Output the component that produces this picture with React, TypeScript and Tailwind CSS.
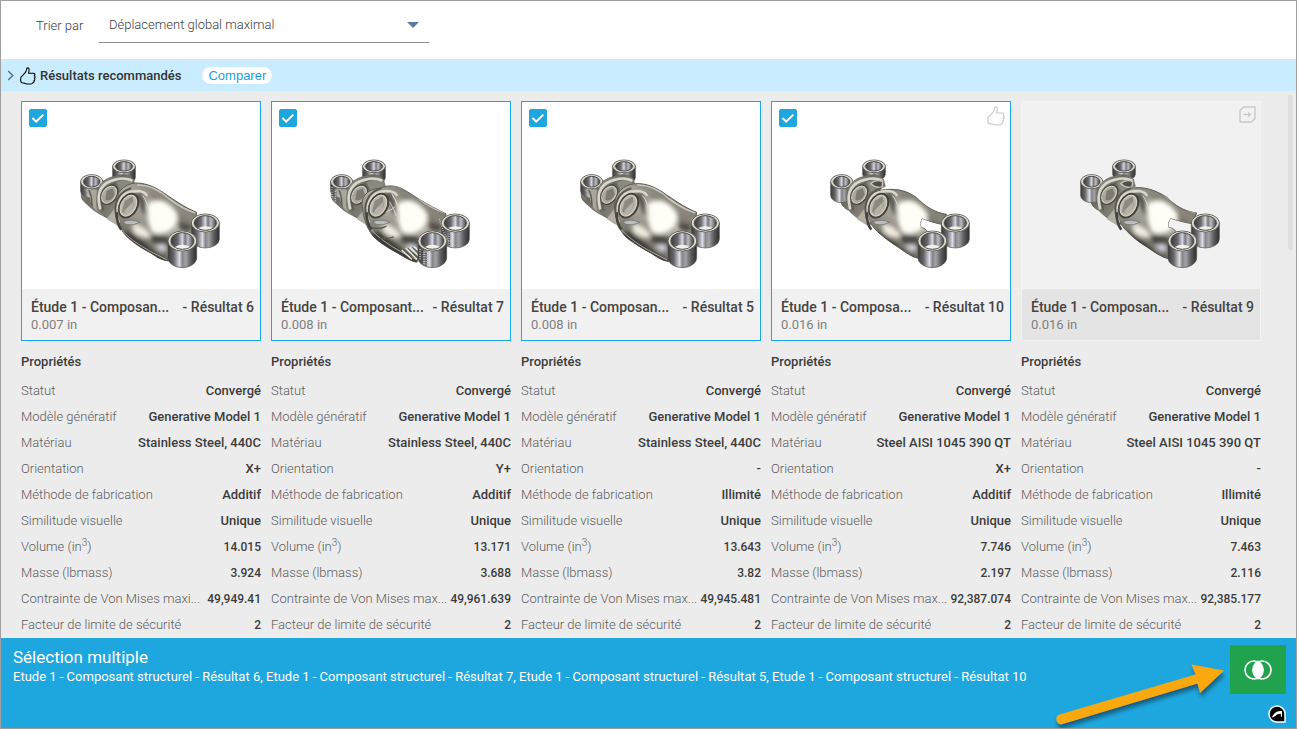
import { useId } from 'react'

type Shape = 'solid' | 'ribbed' | 'smooth' | 'forked' | 'open'

interface Outcome {
  title: string
  suffix: string
  displacement: string
  shape: Shape
  selected: boolean
  badge?: 'recommended' | 'exported'
  values: string[]
  stressLabel: string
}

const outcomes: Outcome[] = [
  {
    title: 'Étude 1 - Composan...',
    suffix: '- Résultat 6',
    displacement: '0.007 in',
    shape: 'solid',
    selected: true,
    stressLabel: 'Contrainte de Von Mises maxi...',
    values: ['Convergé', 'Generative Model 1', 'Stainless Steel, 440C', 'X+', 'Additif', 'Unique', '14.015', '3.924', '49,949.41', '2'],
  },
  {
    title: 'Étude 1 - Composant...',
    suffix: '- Résultat 7',
    displacement: '0.008 in',
    shape: 'ribbed',
    selected: true,
    stressLabel: 'Contrainte de Von Mises max...',
    values: ['Convergé', 'Generative Model 1', 'Stainless Steel, 440C', 'Y+', 'Additif', 'Unique', '13.171', '3.688', '49,961.639', '2'],
  },
  {
    title: 'Étude 1 - Composan...',
    suffix: '- Résultat 5',
    displacement: '0.008 in',
    shape: 'smooth',
    selected: true,
    stressLabel: 'Contrainte de Von Mises max...',
    values: ['Convergé', 'Generative Model 1', 'Stainless Steel, 440C', '-', 'Illimité', 'Unique', '13.643', '3.82', '49,945.481', '2'],
  },
  {
    title: 'Étude 1 - Composa...',
    suffix: '- Résultat 10',
    displacement: '0.016 in',
    shape: 'forked',
    selected: true,
    badge: 'recommended',
    stressLabel: 'Contrainte de Von Mises max...',
    values: ['Convergé', 'Generative Model 1', 'Steel AISI 1045 390 QT', 'X+', 'Additif', 'Unique', '7.746', '2.197', '92,387.074', '2'],
  },
  {
    title: 'Étude 1 - Composan...',
    suffix: '- Résultat 9',
    displacement: '0.016 in',
    shape: 'open',
    selected: false,
    badge: 'exported',
    stressLabel: 'Contrainte de Von Mises max...',
    values: ['Convergé', 'Generative Model 1', 'Steel AISI 1045 390 QT', '-', 'Illimité', 'Unique', '7.463', '2.116', '92,385.177', '2'],
  },
]

const bodies: Record<Shape, string> = {
  solid:
    'M288 330 C284 296 312 266 346 264 C384 264 412 280 440 300 C476 324 500 340 530 352 L520 420 L470 440 L446 498 C424 496 410 486 396 476 C372 464 344 446 326 430 C304 410 286 380 288 330Z',
  ribbed:
    'M276 330 C274 300 300 280 330 280 C350 270 374 270 398 282 C430 300 470 330 528 356 L522 420 L470 440 L440 502 C424 498 408 490 396 482 C372 468 340 452 316 430 C296 412 280 376 276 330Z',
  smooth:
    'M284 330 C284 296 310 268 346 266 C384 264 412 280 440 300 C476 324 500 340 530 352 L520 420 L470 440 L446 500 C424 496 410 486 396 476 C372 464 344 446 322 430 C300 410 286 380 284 330Z',
  forked:
    'M290 330 C290 300 312 286 346 284 C384 280 412 288 440 308 C466 334 492 352 530 358 L516 388 C494 384 476 378 456 370 C450 380 450 392 454 399 C462 398 470 404 472 412 L446 490 C424 486 404 470 384 456 C352 436 324 414 308 394 C294 376 290 356 290 330Z',
  open:
    'M290 330 C290 300 312 280 346 278 C384 276 412 290 440 306 C466 332 490 348 530 354 L516 386 C492 382 472 376 452 370 C444 380 442 390 446 398 C456 398 464 404 470 412 L446 492 C424 486 404 472 384 458 C350 438 324 414 308 394 C294 376 290 356 290 330Z',
}

function Bushing({ cx, cy, rx, ry, depth, metal, bore }: { cx: number; cy: number; rx: number; ry: number; depth: number; metal: string; bore: string }) {
  return (
    <g>
      <path
        d={`M${cx - rx} ${cy} V${cy + depth} A${rx} ${ry} 0 0 0 ${cx + rx} ${cy + depth} V${cy} Z`}
        fill={metal}
        stroke="#55534f"
        strokeWidth="2"
      />
      <ellipse cx={cx} cy={cy} rx={rx} ry={ry} fill="#bdbab2" stroke="#62605a" strokeWidth="3" />
      <ellipse cx={cx} cy={cy} rx={rx - 3} ry={ry - 3} fill="none" stroke="#e9e6de" strokeWidth="3" />
      <ellipse cx={cx} cy={cy} rx={rx - 9} ry={ry - 5} fill={bore} stroke="#4b4946" strokeWidth="3" />
      {rx > 36 && (
        <path
          d={`M${cx - rx + 20} ${cy + ry - 12} Q${cx} ${cy + 4} ${cx + rx - 20} ${cy + ry - 12} Q${cx} ${cy + ry - 3} ${cx - rx + 20} ${cy + ry - 12}Z`}
          fill="#f2f0ea"
        />
      )}
    </g>
  )
}

function BracketModel({ shape }: { shape: Shape }) {
  const id = useId()
  const metal = `${id}metal`
  const bore = `${id}bore`
  const skin = `${id}skin`
  const cheek = `${id}cheek`
  const soft = `${id}soft`
  const clip = `${id}clip`
  const light = shape === 'forked' || shape === 'open'

  return (
    <svg viewBox="6 21 714 561" className="block w-full" aria-hidden="true">
      <defs>
        <linearGradient id={metal}>
          <stop offset="0" stopColor="#3b3a37" />
          <stop offset="0.2" stopColor="#66656a" />
          <stop offset="0.4" stopColor="#dcdde4" />
          <stop offset="0.5" stopColor="#85858b" />
          <stop offset="0.62" stopColor="#a3a3a6" />
          <stop offset="0.8" stopColor="#5d5d60" />
          <stop offset="1" stopColor="#2f2f2f" />
        </linearGradient>
        <linearGradient id={bore}>
          <stop offset="0" stopColor="#3c3b38" />
          <stop offset="0.3" stopColor="#6a6a70" />
          <stop offset="0.5" stopColor="#d8d9e0" />
          <stop offset="0.62" stopColor="#77777d" />
          <stop offset="0.75" stopColor="#bcbdc4" />
          <stop offset="1" stopColor="#44433f" />
        </linearGradient>
        <linearGradient id={skin} x1="0.1" y1="0.9" x2="0.7" y2="0.1">
          <stop offset="0" stopColor="#45433e" />
          <stop offset="0.35" stopColor="#8a867c" />
          <stop offset="0.65" stopColor="#b5b1a6" />
          <stop offset="1" stopColor="#77736a" />
        </linearGradient>
        <linearGradient id={cheek} x1="0" y1="0" x2="1" y2="1">
          <stop offset="0" stopColor="#a19d91" />
          <stop offset="0.35" stopColor="#6c6961" />
          <stop offset="0.7" stopColor="#918e84" />
          <stop offset="1" stopColor="#4b4943" />
        </linearGradient>
        <filter id={soft} x="-40%" y="-40%" width="180%" height="180%">
          <feGaussianBlur stdDeviation="6" />
        </filter>
        <clipPath id={clip}>
          <path d={bodies[shape]} />
        </clipPath>
      </defs>

      {/* rear mounts */}
      <Bushing cx={312} cy={214} rx={34} ry={19} depth={light ? 24 : 34} metal={`url(#${metal})`} bore={`url(#${bore})`} />
      <path
        d={
          light
            ? 'M210 306 C212 330 222 340 236 346 C250 352 258 362 272 372 L304 338 L290 256 L246 270Z'
            : 'M184 262 L184 306 C188 320 200 326 210 336 C226 352 242 358 264 370 L304 338 L290 256 L246 258Z'
        }
        fill={`url(#${cheek})`}
        stroke="#56544e"
        strokeWidth="2"
      />
      <Bushing cx={215} cy={260} rx={33} ry={21} depth={light ? 42 : 28} metal={`url(#${metal})`} bore={`url(#${bore})`} />
      {!light && <path d="M192 284 Q204 286 212 318 Q216 336 232 350 Q224 328 234 286Z" fill="#aaa69b" />}
      {!light && <path d="M206 284 Q216 300 216 334" fill="none" stroke="#5c5952" strokeWidth="4" />}

      {/* rear fork cheek */}
      <path
        d="M232 322 C224 274 250 250 284 244 C306 234 330 240 340 252 L346 274 L306 290 L302 388 C278 382 256 366 240 350Z"
        fill={`url(#${cheek})`}
        stroke="#6a675f"
        strokeWidth="2"
      />
      <path d="M290 262 Q316 248 338 262 L340 278 L304 290Z" fill="#8b887e" />
      <path d="M240 340 C226 286 250 262 286 254 Q312 246 334 256" fill="none" stroke="#d9d6cb" strokeWidth="8" strokeLinecap="round" />
      <path d="M250 346 C238 296 252 276 286 266" fill="none" stroke="#5e5b54" strokeWidth="5" />
      <ellipse cx="268" cy="299" rx="22" ry="31" transform="rotate(34 268 299)" fill="#aaa69b" stroke="#4c4a44" strokeWidth="5" />
      <ellipse cx="267" cy="299" rx="19" ry="28" transform="rotate(34 267 299)" fill="none" stroke="#d5d2c8" strokeWidth="3" />
      <path d="M256 314 L260 288 L278 280 L284 298 Q274 322 256 314Z" fill="#7d7a72" />
      {light && <path d="M302 266 Q318 252 338 260 L336 276 Q318 280 302 266Z" fill="#514f4a" stroke="#c5c2b8" strokeWidth="4" />}
      <path d="M260 372 L284 340 L298 396Z" fill="#b3afa4" />

      {/* main body */}
      <path d={bodies[shape]} fill={`url(#${skin})`} stroke="#5f5c55" strokeWidth="3" />
      <g clipPath={`url(#${clip})`}>
        <g filter={`url(#${soft})`}>
          <path d="M300 420 Q330 400 354 426 Q400 470 450 500 L430 520 L300 470Z" fill="#3d3b37" />
          <path d="M380 290 Q420 300 476 352 L520 370 L500 396 Q460 366 420 330Z" fill="#827e73" />
          <path d="M384 326 Q426 302 462 344 Q482 366 460 396 Q430 426 396 410 Q376 366 384 326Z" fill="#fffef6" />
          <path d="M384 326 Q426 302 462 344 Q482 366 460 396 Q430 426 396 410 Q376 366 384 326Z" fill="#fffef6" opacity="0.6" />
          <path d="M336 384 Q378 390 394 426 Q366 434 340 412Z" fill="#efebde" />
          <path d="M388 424 Q430 412 456 436 L438 478 Q406 464 388 424Z" fill="#4c4a44" />
          <path d="M360 292 Q378 324 384 366 L368 350 Q360 320 344 296Z" fill="#454340" />
          <path d="M474 380 L520 390 L506 412 L480 404Z" fill="#4f4c47" />
          <path d="M404 450 L436 448 L440 468 L420 468Z" fill="#d3d5dd" />
        </g>
        <path d="M352 270 Q400 268 448 312 Q488 342 526 354" fill="none" stroke="#dbd7ca" strokeWidth="5" opacity="0.8" />
        <path d="M368 302 Q384 322 386 350" fill="none" stroke="#d9d6ca" strokeWidth="3" />
        <path d="M308 380 Q334 370 360 382 Q338 394 318 388Z" fill="#b9bdc2" stroke="#6b6861" strokeWidth="2" />
        <path d="M300 400 Q332 438 400 474 L440 494" fill="none" stroke="#d8d4c8" strokeWidth="3" opacity="0.7" />
        {shape === 'ribbed' && (
          <g fill="none" strokeLinecap="round">
            <path d="M366 296 Q390 334 388 376 M358 320 Q372 338 378 362 M340 352 Q360 350 374 336" stroke="#d9d5c9" strokeWidth="3" />
            <path d="M304 398 Q330 404 348 394 M330 430 Q350 434 370 426" stroke="#5a5750" strokeWidth="4" />
            <path d="M396 466 L424 492 M408 460 L440 492 M420 458 L452 488 M434 456 L460 480" stroke="#f0ede2" strokeWidth="4" />
            <path d="M402 464 L430 492 M414 460 L446 492 M428 458 L458 484" stroke="#4a4843" strokeWidth="3" />
          </g>
        )}
      </g>

      {/* front fork eye */}
      <path d="M296 380 C278 334 298 290 350 288 Q372 288 380 300" fill="none" stroke="#d9d6ca" strokeWidth="7" strokeLinecap="round" />
      <path d="M290 368 C278 326 296 290 334 280" fill="none" stroke="#5b5851" strokeWidth="6" />
      <path d="M290 352 Q290 388 304 404" fill="none" stroke="#45433f" strokeWidth="8" />
      <ellipse cx="326" cy="332" rx="26" ry="38" transform="rotate(28 326 332)" fill="#aaa699" stroke="#43413c" strokeWidth="6" />
      <ellipse cx="325" cy="332" rx="22" ry="33" transform="rotate(28 325 332)" fill="#b8b4a8" stroke="#d5d2c7" strokeWidth="3" />
      <path d="M306 350 L314 318 L338 304 L342 330 Q328 362 306 350Z" fill="#8d897f" />
      <path d="M312 348 L342 318 Q340 350 320 356Z" fill="#b5b1a5" />

      {/* front mounts */}
      <Bushing cx={556} cy={384} rx={42} ry={27} depth={48} metal={`url(#${metal})`} bore={`url(#${bore})`} />
      <Bushing cx={487} cy={438} rx={43} ry={30} depth={50} metal={`url(#${metal})`} bore={`url(#${bore})`} />
      {shape === 'ribbed' && (
        <g strokeDasharray="3 4" fill="none" strokeWidth="4">
          <path d="M450 462 V496 M462 470 V508 M474 474 V514" stroke="#e7e5df" />
          <path d="M456 468 V502 M468 474 V512 M538 412 V450" stroke="#3e3d3a" />
          <path d="M508 372 L520 410 L536 440 M186 276 V312 M196 288 V324" stroke="#c9c6bd" />
        </g>
      )}
    </svg>
  )
}

function ThumbIcon({ className }: { className: string }) {
  return (
    <svg viewBox="0 0 18 20" className={className} fill="none" stroke="currentColor" strokeWidth="1.2" strokeLinejoin="round" aria-hidden="true">
      <path d="M1.2 11.2 5.6 6.6C7.2 4.9 7.3 3.1 7.6 1.6 8 .5 9.8.6 10.1 2c.3 1.6 0 3.3-.5 5h5.5c1.8 0 2.2 1.9.9 2.7 1.4.6 1.3 2.3.1 2.8 1 .8.7 2.3-.5 2.7.7 1 .1 2.4-1.2 2.5-.5.9-1.2 1.3-2.3 1.3H8.2c-1.6 0-2.6-.5-3.8-1.2H2.9C1.2 17.6.7 16.2.7 14.6c0-1.4 0-2.6.5-3.4Z" />
    </svg>
  )
}

function ExportedIcon() {
  return (
    <svg viewBox="0 0 17 17" className="size-[17px]" fill="none" stroke="currentColor" strokeWidth="1.4" aria-hidden="true">
      <path d="M4.5 1H16v11.5L12.5 16H1V4.5Z" strokeLinejoin="round" />
      <path d="M4.5 8.5h6" />
      <path d="M9 5.8v5.4l3.4-2.7Z" fill="currentColor" stroke="none" />
    </svg>
  )
}

function OutcomeCard({ outcome }: { outcome: Outcome }) {
  const { selected } = outcome
  return (
    <article className={selected ? 'relative border border-[#1ea7de] bg-white' : 'relative border border-[#f3f3f3] bg-[#f1f1f1]'}>
      {selected && (
        <div className="absolute top-[7px] left-[7px] size-[18px]">
          <input
            type="checkbox"
            defaultChecked
            aria-label={`${outcome.title} ${outcome.suffix}`}
            className="peer block size-[18px] appearance-none rounded-[2px] border border-[#1ea7de] checked:bg-[#1ea7de]"
          />
          <svg viewBox="0 0 18 18" className="pointer-events-none absolute inset-0 hidden peer-checked:block" fill="none" stroke="white" strokeWidth="2" aria-hidden="true">
            <path d="m3.5 9 3.7 3.6L14.3 5.6" />
          </svg>
        </div>
      )}
      {outcome.badge && (
        <span className="absolute top-1 right-1 text-[#c9c9c9]">
          {outcome.badge === 'recommended' ? <ThumbIcon className="h-5 w-5" /> : <ExportedIcon />}
        </span>
      )}
      <BracketModel shape={outcome.shape} />
      <div className={selected ? 'h-[51px] bg-[#f1f1f1] pt-2 pr-[6px] pl-[9px]' : 'h-[51px] bg-[#e4e4e4] pt-2 pr-[6px] pl-[9px]'}>
        <h2 className="flex justify-between text-sm leading-5 font-medium whitespace-nowrap text-[#444]">
          <span>{outcome.title}</span>
          <span>{outcome.suffix}</span>
        </h2>
        <p className="text-[13px] leading-4 text-[#808080]">{outcome.displacement}</p>
      </div>
    </article>
  )
}

function Properties({ outcome }: { outcome: Outcome }) {
  const labels = [
    'Statut',
    'Modèle génératif',
    'Matériau',
    'Orientation',
    'Méthode de fabrication',
    'Similitude visuelle',
    <>Volume (in<sup className="text-[10px]">3</sup>)</>,
    'Masse (lbmass)',
    outcome.stressLabel,
    'Facteur de limite de sécurité',
  ]
  return (
    <section className="pt-[11px] text-[13px] whitespace-nowrap">
      <h3 className="mb-[6px] leading-5 font-medium text-[#3c3c3c]">Propriétés</h3>
      <dl>
        {outcome.values.map((value, i) => (
          <div key={i} className="flex h-[26px] items-center justify-between">
            <dt className="font-light text-[#5c5c5c]">{labels[i]}</dt>
            {/* measured quantities start at the volume row */}
            <dd className={i >= 6 ? 'text-xs font-medium text-[#3c3c3c]' : 'font-medium text-[#3c3c3c]'}>{value}</dd>
          </div>
        ))}
      </dl>
    </section>
  )
}

export default function App() {
  return (
    <div className="flex h-screen flex-col overflow-hidden border border-[#9f9f9f] bg-[#ececec] font-['Roboto','Liberation_Sans',sans-serif]">
      <header className="flex h-[58px] shrink-0 items-start bg-white pl-[35px]">
        <label htmlFor="sort" className="w-[63px] pt-[15px] text-[13px] leading-5 font-light text-[#3c3c3c]">
          Trier par
        </label>
        <div className="relative w-[330px]">
          <select
            id="sort"
            className="block h-[42px] w-full appearance-none border-b border-[#8f8f8f] bg-transparent pt-[6px] pr-8 pl-[10px] text-[13px] leading-5 font-light text-[#3c3c3c] outline-none"
          >
            <option>Déplacement global maximal</option>
          </select>
          <svg viewBox="0 0 12 6" className="pointer-events-none absolute top-[21px] right-[10px] h-[6px] w-3" aria-hidden="true">
            <path d="M0 0h12L6 6Z" fill="#587a9c" />
          </svg>
        </div>
      </header>

      <div className="flex h-8 shrink-0 items-center bg-[#c9edff] pt-px pl-[6px]">
        <button type="button" aria-label="Développer" className="flex items-center">
          <svg viewBox="0 0 7 12" className="h-[11px] w-[7px]" fill="none" stroke="#51708c" strokeWidth="1.5" aria-hidden="true">
            <path d="m1 1 5 5-5 5" />
          </svg>
        </button>
        <ThumbIcon className="ml-[6px] h-[18px] w-4 text-black" />
        <h1 className="ml-1 text-[13px] font-medium text-[#333]">Résultats recommandés</h1>
        <button type="button" className="ml-[21px] h-[17px] rounded-full bg-white px-[6px] font-['Liberation_Sans',Arial,sans-serif] text-[13px] leading-[17px] text-[#1a9fdc]">
          Comparer
        </button>
      </div>

      <main className="flex min-h-0 flex-1 overflow-hidden pr-[3px] pl-5">
        <div className="grid flex-1 grid-cols-5 gap-x-[10px] pt-[10px]">
          {outcomes.map((outcome) => (
            <div key={outcome.suffix} className="min-w-0">
              <OutcomeCard outcome={outcome} />
              <Properties outcome={outcome} />
            </div>
          ))}
        </div>
        <div className="mt-1 ml-[27px] h-[155px] w-[5px] rounded-full bg-[#dfdfdf]" />
      </main>

      <footer className="relative flex h-[90px] shrink-0 justify-between bg-[#1ea7de] pr-[10px] pl-3 text-white">
        <div className="pt-2">
          <h2 className="text-[17px] leading-[22px]">Sélection multiple</h2>
          <p className="text-[13px] leading-[18px]">
            Etude 1 - Composant structurel - Résultat 6, Etude 1 - Composant structurel - Résultat 7, Etude 1 - Composant structurel - Résultat 5, Etude 1 - Composant
            structurel - Résultat 10
          </p>
        </div>
        <div className="flex flex-col items-end justify-between pt-[7px] pb-[5px]">
          <button type="button" aria-label="Comparer les résultats" className="flex h-[49px] w-14 items-center justify-center bg-[#21a34d]">
            <svg viewBox="0 0 28 20" className="h-5 w-7" fill="none" stroke="white" strokeWidth="1.6" aria-hidden="true">
              <circle cx="10" cy="10" r="9" />
              <circle cx="18" cy="10" r="9" />
              <path d="M14 1.5a10 10 0 0 1 0 17 10 10 0 0 1 0-17Z" fill="white" />
            </svg>
          </button>
          <svg viewBox="0 0 18 18" className="size-[18px]" aria-hidden="true">
            <path d="M9 1a8 8 0 1 0 0 16h8V9a8 8 0 0 0-8-8Z" fill="black" stroke="white" strokeWidth="1.5" />
            <path d="M3.5 12.5 6 9q2.5-3.5 8-3v6.5q-1.6-.6-1.2-3.7Q9.5 8.5 7.500 10.700 6 12.500 3.500 12.500Z" fill="white" />
          </svg>
        </div>
        <svg viewBox="0 0 176 68" className="pointer-events-none absolute right-[70px] bottom-0 h-[68px] w-44" aria-hidden="true">
          <defs>
            <filter id="arrow-shadow" x="-10%" y="-20%" width="120%" height="150%">
              <feDropShadow dx="1" dy="4" stdDeviation="2" floodColor="#0b3d55" floodOpacity="0.7" />
            </filter>
          </defs>
          <path
            d="M9.5 54.5 L145.5 14.5 L141.5 4.5 L174 10.5 L150 33 L147.5 23.5 L12.5 64 A5 5 0 0 1 9.5 54.5Z"
            fill="#f9a90b"
            filter="url(#arrow-shadow)"
          />
        </svg>
      </footer>
    </div>
  )
}
